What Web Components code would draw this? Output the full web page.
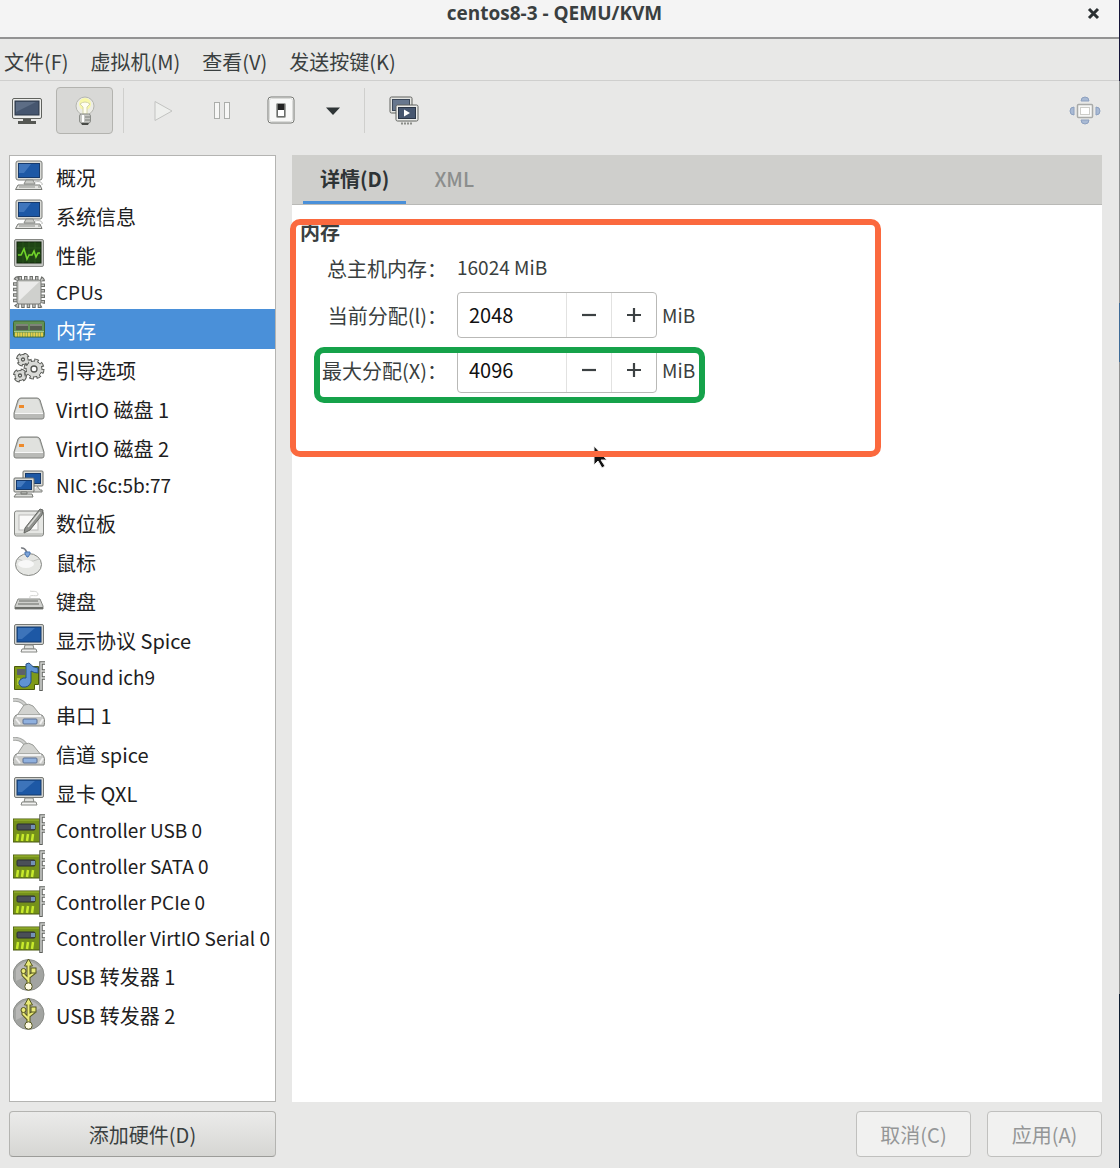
<!DOCTYPE html>
<html lang="zh-CN">
<head>
<meta charset="utf-8">
<title>centos8-3 - QEMU/KVM</title>
<style>
  body {
    margin: 0;
    font: 20px/28px "Noto Sans CJK SC", sans-serif;
    color: #3a3f40;
  }
</style>
</head>
<body>
<vm-window heading="centos8-3 - QEMU/KVM">
  <menu-bar slot="menu">
    <button>文件(F)</button>
    <button>虚拟机(M)</button>
    <button>查看(V)</button>
    <button>发送按键(K)</button>
  </menu-bar>
  <tool-bar slot="tools"></tool-bar>

  <hardware-list slot="side">
    <hardware-row icon="computer">概况</hardware-row>
    <hardware-row icon="computer">系统信息</hardware-row>
    <hardware-row icon="performance">性能</hardware-row>
    <hardware-row icon="cpu" latin>CPUs</hardware-row>
    <hardware-row icon="memory" selected>内存</hardware-row>
    <hardware-row icon="gears">引导选项</hardware-row>
    <hardware-row icon="disk">VirtIO 磁盘 1</hardware-row>
    <hardware-row icon="disk">VirtIO 磁盘 2</hardware-row>
    <hardware-row icon="network" latin>NIC :6c:5b:77</hardware-row>
    <hardware-row icon="tablet">数位板</hardware-row>
    <hardware-row icon="mouse">鼠标</hardware-row>
    <hardware-row icon="keyboard">键盘</hardware-row>
    <hardware-row icon="display">显示协议 Spice</hardware-row>
    <hardware-row icon="sound" latin>Sound ich9</hardware-row>
    <hardware-row icon="serial">串口 1</hardware-row>
    <hardware-row icon="serial">信道 spice</hardware-row>
    <hardware-row icon="display">显卡 QXL</hardware-row>
    <hardware-row icon="card" latin>Controller USB 0</hardware-row>
    <hardware-row icon="card" latin>Controller SATA 0</hardware-row>
    <hardware-row icon="card" latin>Controller PCIe 0</hardware-row>
    <hardware-row icon="card" latin>Controller VirtIO Serial 0</hardware-row>
    <hardware-row icon="usb">USB 转发器 1</hardware-row>
    <hardware-row icon="usb">USB 转发器 2</hardware-row>
  </hardware-list>
  <push-button slot="side">添加硬件(D)</push-button>

  <memory-panel slot="main">
    <memory-row label="总主机内存：" text="16024 MiB"></memory-row>
    <memory-row label="当前分配(l)：" value="2048" unit="MiB"></memory-row>
    <memory-row label="最大分配(X)：" value="4096" unit="MiB"></memory-row>
  </memory-panel>
  <push-button slot="actions" disabled>取消(C)</push-button>
  <push-button slot="actions" disabled>应用(A)</push-button>
</vm-window>

<script>
  // Icon drawings, all on a 32x32 grid
  const ICONS = {
    computer: `
      <rect x="3" y="1" width="26" height="19" rx="2" fill="#d9dad6" stroke="#7b7d79"/>
      <rect x="5.500" y="3.500" width="21" height="14" fill="#1d58a5" stroke="#173a6b"/>
      <path d="M6 4h12l-7 9H6z" fill="#5d8fcf" opacity=".55"/>
      <path d="M13 20h7l2 4H11z" fill="#c9cac6" stroke="#8a8c88"/>
      <path d="M5 25h22l2 4.500H2.500z" fill="#e4e4e1" stroke="#777975"/>
      <path d="M6 27h16M25 27h2" stroke="#8d8f8b"/>
      <path d="M22 22c4-1 8 0 7 3" fill="none" stroke="#b5b6b3"/>`,
    performance: `
      <rect x="1.500" y="1.500" width="29" height="27" rx="1.500" fill="#c3c5c1" stroke="#858783"/>
      <rect x="4" y="4" width="24" height="21" fill="#1f4515" stroke="#12270c"/>
      <path d="M4 10h24M4 16h24M10 4v21M16 4v21M22 4v21" stroke="#2d5a1e" stroke-width=".7"/>
      <path d="M5 17h3l3-6 3 10 2-4h3l2-4 2 6 2-4h2" fill="none" stroke="#72d42a" stroke-width="1.600"/>`,
    cpu: `
      <rect x="2.500" y="2.500" width="27" height="27" rx="3" fill="none" stroke="#6e706c" stroke-width="5" stroke-dasharray="3.500 2"/>
      <rect x="2.500" y="2.500" width="27" height="27" rx="3" fill="none" stroke="#c3c4c1" stroke-width="3" stroke-dasharray="1.500 4" stroke-dashoffset="-1"/>
      <rect x="4" y="4" width="24" height="24" rx="2" fill="#cfd0cd" stroke="#777975"/>
      <path d="M6 6h20L6 25z" fill="#ebebea"/>`,
    memory: `
      <rect x="0.500" y="8" width="31" height="16" rx="1.500" fill="#629153" stroke="#3f6435"/>
      <rect x="3" y="11" width="12" height="6" fill="#555a4f"/><rect x="17" y="11" width="12" height="6" fill="#555a4f"/>
      <path d="M3 12h12M17 12h12" stroke="#a9ada4"/>
      <path d="M1 18.500h30" stroke="#a5c78d"/>
      <path d="M2 21.500h28" stroke="#e6cf4c" stroke-width="4" stroke-dasharray="2 .6"/>`,
    gears: `
      <g fill="none" stroke="#5b5d59" stroke-width="5">
        <circle cx="10" cy="6.500" r="4.500" stroke-dasharray="4.500 2.568"/>
        <circle cx="7" cy="22.500" r="4.500" stroke-dasharray="4.500 2.568"/>
        <circle cx="21" cy="16" r="8" stroke-dasharray="4 2.283"/>
      </g>
      <g fill="#d9dad7" stroke="#5b5d59">
        <circle cx="10" cy="6.500" r="5"/><circle cx="7" cy="22.500" r="5"/><circle cx="21" cy="16" r="8"/>
      </g>
      <g fill="none" stroke="#d9dad7" stroke-width="4">
        <circle cx="10" cy="6.500" r="4" stroke-dasharray="2.500 3.783" stroke-dashoffset="-.7"/>
        <circle cx="7" cy="22.500" r="4" stroke-dasharray="2.500 3.783" stroke-dashoffset="-.7"/>
        <circle cx="21" cy="16" r="7.500" stroke-dasharray="2 3.890" stroke-dashoffset="-.8"/>
      </g>
      <g fill="#fff" stroke="#555753" stroke-width="1.300"><circle cx="10" cy="6.500" r="1.500"/><circle cx="7" cy="22.500" r="1.500"/><circle cx="21" cy="16" r="3"/></g>`,
    disk: `
      <path d="M8 6h16q2 0 3 2l4 13v4q0 2-2 2H3q-2 0-2-2v-4L5 8q1-2 3-2z" fill="#b9bab7" stroke="#7e807c"/>
      <path d="M8 7h16q1 0 2 2l4 12H2L6 9q1-2 2-2z" fill="#e0e1de"/>
      <path d="M2 21.500h28" stroke="#f7f7f7"/>
      <rect x="6" y="13" width="5" height="3" fill="#ee8a2b"/>`,
    network: `
      <rect x="10" y="2" width="20" height="15" rx="1" fill="#d9dad6" stroke="#6d6f6b"/>
      <rect x="12.500" y="4.500" width="15" height="10" fill="#1d58a5" stroke="#173a6b"/>
      <path d="M24 17l3 4h2v2h-9" fill="#d5d6d3" stroke="#858783"/>
      <rect x="1" y="9" width="20" height="14" rx="1" fill="#d9dad6" stroke="#6d6f6b"/>
      <rect x="3.500" y="11.500" width="15" height="9" fill="#1d58a5" stroke="#173a6b"/>
      <path d="M4 12h9l-5 6H4z" fill="#5d8fcf" opacity=".6"/>
      <path d="M8 23h6v2H8zM3 25h16l1 3H1z" fill="#dddedb" stroke="#777975"/>`,
    tablet: `
      <rect x="1.500" y="5" width="29" height="25" rx="2" fill="#e6e7e4" stroke="#858783"/>
      <rect x="6" y="9" width="19" height="15" fill="#fafaf9" stroke="#b9bab7"/>
      <path d="M2 28h28" stroke="#a8aaa6"/>
      <path d="M27 3l3 1-1 5-12 15-6 3 1-5z" fill="#8f918d" stroke="#666864"/>
      <path d="M27 6L15 21" stroke="#d8d9d6" stroke-width="1.500"/>`,
    mouse: `
      <path d="M8 3c5-1 5 4 7 6" fill="none" stroke="#777b80" stroke-width="1.500"/>
      <ellipse cx="15.500" cy="19.500" rx="13" ry="11" fill="#e5e6e3" stroke="#858783"/>
      <path d="M5 14q10 5 21 0" fill="none" stroke="#c5c6c3"/>
      <ellipse cx="13" cy="19" rx="8" ry="4" fill="#f8f8f8"/>
      <path d="M12 7h5v2l-2 3h-1l-2-3z" fill="#7da4d8" stroke="#4a76b2"/>`,
    keyboard: `
      <path d="M17 14c-2-5 9 0 8-4s-6-2-8-3" fill="none" stroke="#d2d3d1"/>
      <path d="M5 15h22l3 7v3H2v-3z" fill="#cfd0cd" stroke="#858783"/>
      <path d="M6 17h19M5 20h21" stroke="#8a8c88" stroke-width="1.500"/>
      <path d="M2 24h28" stroke="#6d6f6b" stroke-width="2"/>`,
    display: `
      <rect x="1.500" y="1.500" width="29" height="20" rx="1.500" fill="#d3d4d1" stroke="#777975"/>
      <rect x="4" y="4" width="24" height="15" fill="#1d58a5" stroke="#173a6b"/>
      <path d="M5 5h17L9 16H5z" fill="#5d8fcf" opacity=".5"/>
      <path d="M12 22h8l1 4H11z" fill="#e0e1de" stroke="#858783"/>
      <path d="M9 26h14l1 3H8z" fill="#f2f2f1" stroke="#858783"/>`,
    sound: `
      <path d="M1.500 5.500h24v18h-4v5h-20z" fill="#7f9a17" stroke="#4a5a0c"/>
      <path d="M4 8h8v6H4z" fill="#5c616a"/><path d="M4 17h3v7H4z" fill="#a8c42e"/>
      <path d="M13 3l3-1q4 5 9 5v5q-4 0-7-2v11q-2 6-9 5-5-3-2-7 3-3 6-2z" fill="#5f93d3" stroke="#274f88"/>
      <path d="M32 2h-4v28M28 10h4M28 17h4" fill="none" stroke="#5e605c" stroke-width="3.500"/>
      <path d="M32 2h-4v27M28 10h4M28 17h4" fill="none" stroke="#d8d9d6" stroke-width="1.500"/>`,
    serial: `
      <path d="M0 2c8-1 13 4 14 9" fill="none" stroke="#a6a8a5" stroke-width="4"/>
      <path d="M0 2c8-1 13 4 14 9" fill="none" stroke="#cfd0ce" stroke-width="2"/>
      <path d="M11 7q5-2 9 1l9 11H3z" fill="#d2d3d0" stroke="#9a9c98"/>
      <path d="M3 17h26q4 4 2 11H1q-2-7 2-11z" fill="#c9cac8" stroke="#858783"/>
      <path d="M4 18h24" stroke="#f2f2f2" stroke-width="2"/>
      <rect x="10" y="21" width="14" height="5" rx="1" fill="#8fb0de" stroke="#5a6f92"/>
      <path d="M3 21l4 5M30 21l-3 5" stroke="#f1f1f1" stroke-width="2"/>`,
    card: `
      <path d="M0 5h27v23H0z" fill="#75911b" stroke="#4a5a0c"/>
      <path d="M1 6h25" stroke="#a1bd35"/>
      <rect x="4" y="10" width="18" height="6" rx="1" fill="#4a4f57" stroke="#2b2f35"/>
      <rect x="18" y="11" width="4" height="4" fill="#7391b8"/>
      <path d="M4 27l1-7M9 27l1-7M14 27l1-7M19 27l1-7" stroke="#c8ea2c" stroke-width="2.500"/>
      <path d="M32 2h-4v29M28 10h4M28 17h4" fill="none" stroke="#5e605c" stroke-width="3.500"/>
      <path d="M32 2h-4v28M28 10h4M28 17h4" fill="none" stroke="#d0d1ce" stroke-width="1.500"/>`,
    usb: `
      <circle cx="15.500" cy="16" r="15.500" fill="#a2a4a1" stroke="#8d8f8b"/>
      <path d="M3 10q12-15 25 0L3 22z" fill="#c6c7c5" opacity=".6"/>
      <g fill="none" stroke="#55571f" stroke-width="4"><path d="M15.500 27V6M15.500 21l-5-5v-4M15.500 18l5-4v-3"/></g>
      <path d="M15.500 0l4 7h-8z" fill="#e9ea78" stroke="#55571f"/>
      <g fill="none" stroke="#e9ea78" stroke-width="2"><path d="M15.500 27V6M15.500 21l-5-5v-4M15.500 18l5-4v-3"/></g>
      <circle cx="10.500" cy="12" r="2.500" fill="#e9ea78" stroke="#55571f"/>
      <rect x="18" y="9" width="5" height="5" fill="#e9ea78" stroke="#55571f"/>
      <circle cx="15.500" cy="27.500" r="3.700" fill="#fffbe4" stroke="#55571f"/>`,
    console: `
      <rect x="1.500" y="3.500" width="29" height="20" rx="1.500" fill="#ecedeb" stroke="#60625e"/>
      <rect x="4" y="6" width="24" height="14" fill="#46566f" stroke="#2b3647"/>
      <path d="M5 7h20L5 17z" fill="#6d7d95" opacity=".6"/>
      <path d="M12 24h8v2h5v3H7v-3h5z" fill="#555753"/>`,
    bulb: `
      <circle cx="16" cy="11" r="9" fill="#ecece6" stroke="#b5b6b0"/>
      <circle cx="16" cy="9" r="6" fill="#f8f8a8"/>
      <path d="M11 9q5-4 10 0l-3 3v7h-4v-7z" fill="#fffef0" stroke="#d4d4a8"/>
      <rect x="10.500" y="19" width="11" height="9" rx="2" fill="#c6c7c3" stroke="#8c8e8a"/>
      <path d="M14 20v7" stroke="#fff" stroke-width="2"/>
      <path d="M16 22h5M16 25h5" stroke="#7c7e7a"/><path d="M12 28h8l-1 2h-6z" fill="#494b47"/>`,
    play: `<path d="M8 6.500v19L25 16z" fill="#eeefed" stroke="#c2c3c1"/>`,
    pause: `<g fill="#f7f7f6" stroke="#abadaa"><rect x="8.500" y="7.500" width="5" height="16"/><rect x="18.500" y="7.500" width="5" height="16"/></g>`,
    shutdown: `
      <rect x="3" y="2" width="26" height="26" rx="3" fill="#f8f8f7" stroke="#777975"/>
      <rect x="4.500" y="3.500" width="23" height="23" rx="2" fill="none" stroke="#dadbd9"/>
      <rect x="11.500" y="8.500" width="9" height="14" rx="1" fill="#6b6d6a" stroke="#a0a29f"/>
      <path d="M13 15h6v6h-6z" fill="#fff"/><path d="M13 9h6v6h-6z" fill="#222"/>`,
    arrow: `<path d="M9 12.500h14L16 20z" fill="#2e3436"/>`,
    snapshots: `
      <rect x="2" y="2" width="22" height="16" rx="1.500" fill="#e4e5e2" stroke="#60625e"/>
      <rect x="4.500" y="4.500" width="17" height="11" fill="#67778e" stroke="#3c4859"/>
      <rect x="8" y="10" width="22" height="16" rx="1.500" fill="#ecedeb" stroke="#60625e"/>
      <rect x="10.500" y="12.500" width="17" height="11" fill="#46566f" stroke="#2b3647"/>
      <path d="M16 14.500v7l6-3.500z" fill="#fff"/><path d="M13 28.500h12" stroke="#8b8d89" stroke-width="2" stroke-dasharray="2 1"/>`,
    fullscreen: `
      <g fill="#a9bad4" stroke="#8da0bf">
        <path d="M12 6q0-4 4-4t4 4z"/><path d="M12 25q0 4 4 4t4-4z"/>
        <path d="M5 12q-4 0-4 4t4 4z"/><path d="M27 12q4 0 4 4t-4 4z"/>
      </g>
      <rect x="8.500" y="9.500" width="15" height="13" rx="1" fill="#f6f6f5" stroke="#a9aaa8" stroke-width="1.500"/>
      <rect x="11.500" y="12.500" width="9" height="7" fill="#fff" stroke="#cdcdc9"/>`,
    close: `<path d="M11 9l9 9M20 9l-9 9" stroke="#2b3032" stroke-width="3"/>`,
    minus: `<path d="M9 16h14" stroke="#3c4143" stroke-width="2.200"/>`,
    plus: `<path d="M9 16h14M16 9v14" stroke="#3c4143" stroke-width="2.200"/>`
  };

  class VmIcon extends HTMLElement {
    connectedCallback() {
      this.attachShadow({ mode: 'open' }).innerHTML = `
        <style>
          :host { display: block; flex: none; width: 32px; height: 32px; }
          svg { display: block; }
        </style>
        <svg width="32" height="32" viewBox="0 0 32 32" aria-hidden="true">${ICONS[this.getAttribute('name')]}</svg>
      `;
    }
  }

  class VmWindow extends HTMLElement {
    connectedCallback() {
      this.attachShadow({ mode: 'open' }).innerHTML = `
        <style>
          :host {
            display: flex;
            flex-direction: column;
            box-sizing: border-box;
            min-height: 100vh;
            background: #e8e8e7;
            border: 0 solid;
            border-right-width: 1px;
            border-image: linear-gradient(#14143a 7%, #8f9192 7% 26%, #3c6a96 26% 31%, #8f9192 31% 85%, #0c1c30 85%) 1;
          }
          header {
            display: grid;
            grid-template-columns: 40px 1fr 50px;
            align-items: center;
            height: 37px;
            background: #f4f4f4;
            border-bottom: 2px solid #939393;
          }
          h1 {
            grid-column: 2;
            margin: 0;
            padding-bottom: 11px;
            font: 700 19px/26px "Open Sans", sans-serif;
            text-align: center;
          }
          header button {
            padding: 0 0 11px;
            border: 0;
            background: none;
            height: 37px;
            display: grid;
            place-items: center;
          }
          .body { flex: 1; display: flex; gap: 16px; padding: 15px 17px 11px 9px; }
          .side { display: flex; flex-direction: column; gap: 9px; width: 267px; }
          .main { flex: 1; display: flex; flex-direction: column; gap: 9px; }
          .actions { display: flex; justify-content: flex-end; gap: 16px; }
        </style>
        <header>
          <h1>${this.getAttribute('heading')}</h1>
          <button aria-label="关闭"><vm-icon name="close"></vm-icon></button>
        </header>
        <slot name="menu"></slot>
        <slot name="tools"></slot>
        <div class="body">
          <div class="side"><slot name="side"></slot></div>
          <div class="main">
            <slot name="main"></slot>
            <div class="actions"><slot name="actions"></slot></div>
          </div>
        </div>
      `;
    }
  }

  class MenuBar extends HTMLElement {
    connectedCallback() {
      this.attachShadow({ mode: 'open' }).innerHTML = `
        <style>
          :host {
            display: flex;
            gap: 22px;
            padding: 9px 4px 4px;
            border-bottom: 1px solid #cfcfce;
          }
          ::slotted(button) {
            padding: 0;
            border: 0;
            background: none;
            font: inherit;
            color: inherit;
          }
        </style>
        <slot></slot>
      `;
    }
  }

  class ToolBar extends HTMLElement {
    connectedCallback() {
      this.attachShadow({ mode: 'open' }).innerHTML = `
        <style>
          :host { display: flex; align-items: center; gap: 2px; padding: 6px; padding-left: 0; height: 47px; }
          button {
            display: grid;
            place-items: center;
            box-sizing: border-box;
            width: 57px;
            height: 47px;
            padding: 0;
            border: 1px solid transparent;
            border-radius: 4px;
            background: none;
          }
          button.on { background: #d8d8d6; border-color: #b3b3af; }
          button.first { width: 54px; }
          button.slim { width: 43px; }
          i { width: 1px; height: 45px; margin: 0 8px; background: #cfcfcd; }
          .end { margin-left: auto; }
        </style>
        <button class="first" aria-label="控制台"><vm-icon name="console"></vm-icon></button>
        <button class="on" aria-label="详情" aria-pressed="true"><vm-icon name="bulb"></vm-icon></button>
        <i></i>
        <button aria-label="运行"><vm-icon name="play"></vm-icon></button>
        <button aria-label="暂停"><vm-icon name="pause"></vm-icon></button>
        <button aria-label="关机"><vm-icon name="shutdown"></vm-icon></button>
        <button class="slim" aria-label="关机选项"><vm-icon name="arrow"></vm-icon></button>
        <i></i>
        <button aria-label="快照"><vm-icon name="snapshots"></vm-icon></button>
        <button class="end" aria-label="全屏"><vm-icon name="fullscreen"></vm-icon></button>
      `;
    }
  }

  class HardwareList extends HTMLElement {
    connectedCallback() {
      this.attachShadow({ mode: 'open' }).innerHTML = `
        <style>
          :host {
            display: block;
            flex: 1;
            border: 1px solid #b4b4b2;
            background: #fff;
            color: #1d2021;
          }
        </style>
        <slot></slot>
      `;
    }
  }

  class HardwareRow extends HTMLElement {
    connectedCallback() {
      this.attachShadow({ mode: 'open' }).innerHTML = `
        <style>
          :host { display: block; }
          button {
            display: flex;
            align-items: center;
            gap: 11px;
            box-sizing: border-box;
            width: 100%;
            height: 39px;
            padding: 0 0 0 3px;
            border: 0;
            background: none;
            font: inherit;
            color: inherit;
            text-align: left;
            white-space: nowrap;
          }
          span { padding-top: 4px; }
          :host([latin]) button { height: 36px; padding-top: 2px; font-size: 19px; }
          :host([latin]) span { padding-top: 0; }
          :host([selected]) button { height: 40px; background: #4a90d9; color: #fff; }
        </style>
        <button><vm-icon name="${this.getAttribute('icon')}"></vm-icon><span><slot></slot></span></button>
      `;
    }
  }

  class PushButton extends HTMLElement {
    connectedCallback() {
      this.attachShadow({ mode: 'open' }).innerHTML = `
        <style>
          :host { display: block; }
          button {
            box-sizing: border-box;
            width: 100%;
            min-width: 115px;
            height: 46px;
            padding: 2px 16px 0;
            border: 1px solid #b4b4b1;
            border-bottom-color: #9c9c99;
            border-radius: 4px;
            background: linear-gradient(#ebebea, #d6d6d3);
            font: inherit;
            color: inherit;
          }
          button:disabled { border-color: #c0c0be; background: #f1f1f0; color: #949697; }
        </style>
        <button ${this.hasAttribute('disabled') ? 'disabled' : ''}><slot></slot></button>
      `;
    }
  }

  class MemoryPanel extends HTMLElement {
    connectedCallback() {
      this.attachShadow({ mode: 'open' }).innerHTML = `
        <style>
          :host { flex: 1; display: flex; flex-direction: column; background: #fff; }
          nav {
            display: flex;
            padding: 0 11px;
            background: #cfcfcc;
            border-bottom: 1px solid #b9b9b6;
          }
          nav button {
            height: 49px;
            padding: 2px 17px 0;
            border: 0;
            border-bottom: 3px solid transparent;
            background: none;
            font: inherit;
            font-weight: 500;
            color: #8c8e8d;
          }
          nav button.on { border-color: #4a90d9; color: #2e3436; font-weight: 700; }
          nav button + button { margin-left: 11px; }
          section { position: relative; padding: 13px 8px; }
          h2 { margin: 0 0 7px; font-size: 20px; line-height: 28px; }
          .mark { position: absolute; box-sizing: border-box; border: 6px solid; border-radius: 10px; pointer-events: none; }
          .outer { left: -2px; top: 14px; width: 591px; height: 238px; border-color: #fb693e; }
          .inner { left: 22px; top: 142px; width: 391px; height: 56px; border-color: #15a24a; }
          .pointer { position: absolute; left: 300px; top: 239px; }
        </style>
        <nav>
          <button class="on">详情(D)</button>
          <button>XML</button>
        </nav>
        <section>
          <h2>内存</h2>
          <slot></slot>
          <svg class="pointer" width="18" height="26" viewBox="0 0 18 26" aria-hidden="true">
            <path d="M2 2v19l4-4 4 7 3-2-4-6h6z" fill="#111" stroke="#eee"/>
          </svg>
          <div class="mark outer"></div>
          <div class="mark inner"></div>
        </section>
      `;
    }
  }

  class MemoryRow extends HTMLElement {
    connectedCallback() {
      const value = this.getAttribute('value');
      const label = this.getAttribute('label');
      this.attachShadow({ mode: 'open' }).innerHTML = `
        <style>
          :host {
            display: grid;
            grid-template-columns: 147px auto 1fr;
            align-items: center;
            column-gap: 10px;
            margin-bottom: 9px;
          }
          .name { text-align: right; white-space: nowrap; padding-top: 2px; }
          .total, .unit { font-size: 19px; }
          .total { padding-bottom: 2px; }
          .field { display: flex; align-items: center; gap: 5px; }
          .spin {
            display: flex;
            box-sizing: border-box;
            width: 200px;
            height: 46px;
            border: 1px solid #b9b9b7;
            border-radius: 4px;
            background: #fff;
          }
          input {
            flex: 1;
            min-width: 0;
            padding: 0 11px;
            border: 0;
            background: none;
            font: inherit;
            color: #111;
            outline: 0;
          }
          button {
            display: grid;
            place-items: center;
            width: 45px;
            padding: 0;
            border: 0;
            border-left: 1px solid #e2e2e1;
            background: none;
          }
        </style>
        ${value ? `
          <label class="name" for="amount">${label}</label>
          <div class="field">
            <div class="spin">
              <input id="amount" inputmode="numeric" value="${value}">
              <button aria-label="减少"><vm-icon name="minus"></vm-icon></button>
              <button aria-label="增加"><vm-icon name="plus"></vm-icon></button>
            </div>
            <span class="unit">${this.getAttribute('unit')}</span>
          </div>
        ` : `
          <span class="name">${label}</span>
          <span class="total">${this.getAttribute('text')}</span>
        `}
      `;
    }
  }

  customElements.define('vm-icon', VmIcon);
  customElements.define('vm-window', VmWindow);
  customElements.define('menu-bar', MenuBar);
  customElements.define('tool-bar', ToolBar);
  customElements.define('hardware-list', HardwareList);
  customElements.define('hardware-row', HardwareRow);
  customElements.define('push-button', PushButton);
  customElements.define('memory-panel', MemoryPanel);
  customElements.define('memory-row', MemoryRow);
</script>
</body>
</html>
